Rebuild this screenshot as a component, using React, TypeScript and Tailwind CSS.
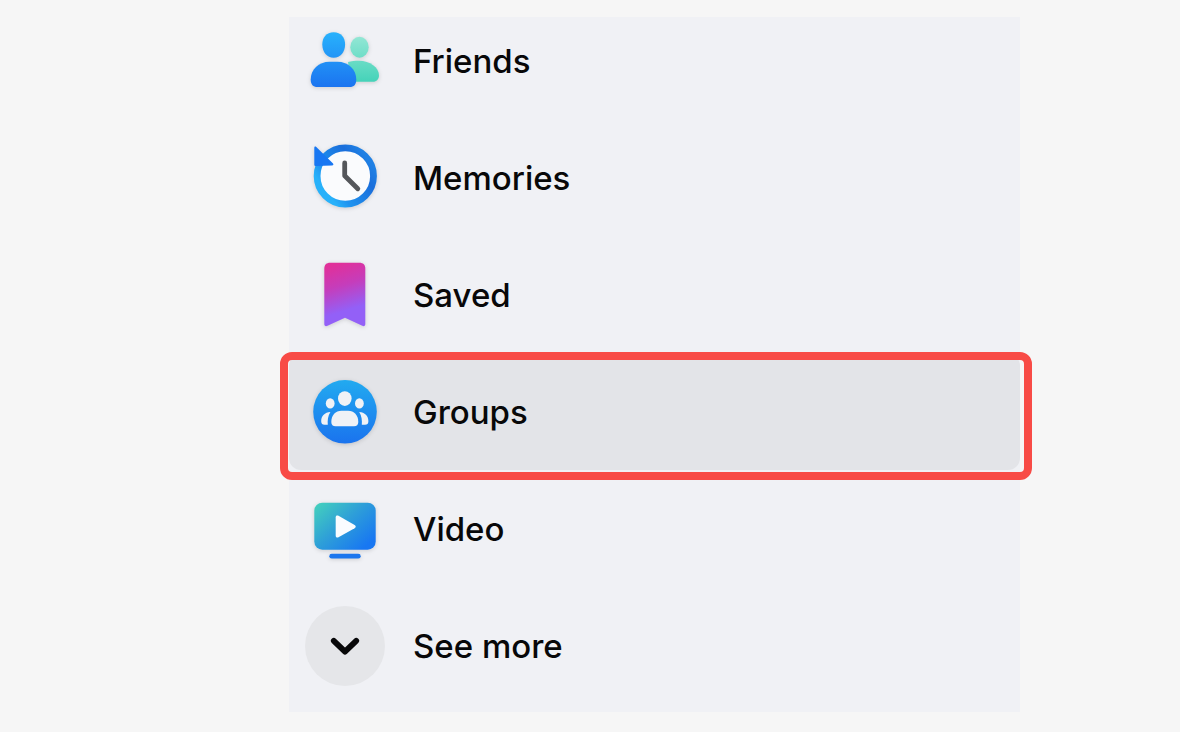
import type { ReactNode } from 'react';
import clsx from 'clsx';

const FriendsIcon = () => (
  <svg viewBox="0 0 80 80" className="size-20 drop-shadow-sm" aria-hidden="true">
    <defs>
      <linearGradient id="friends-front" gradientUnits="userSpaceOnUse" x1="28" y1="11" x2="28" y2="66">
        <stop offset="0" stopColor="#28b2fc" />
        <stop offset="1" stopColor="#1b74f0" />
      </linearGradient>
      <linearGradient id="friends-back" gradientUnits="userSpaceOnUse" x1="54" y1="15" x2="54" y2="60">
        <stop offset="0" stopColor="#94e7d5" />
        <stop offset="1" stopColor="#46d3b9" />
      </linearGradient>
    </defs>
    <g fill="url(#friends-back)">
      <ellipse cx="54.5" cy="26.2" rx="9.2" ry="10.5" />
      <path d="M43 41C46 40 50 39.7 54 39.7C65 39.7 74 46.5 74 54.5C74 58 71.5 60.8 68 60.8H46Z" />
    </g>
    <g fill="url(#friends-front)">
      <path d="M28.7 11.3C36 11.3 40.1 16.5 40.1 23.5C40.1 31 35.5 36.7 28.7 36.7C21.9 36.7 17.3 31 17.3 23.5C17.3 16.5 21.4 11.3 28.7 11.3Z" />
      <path d="M24.5 40.7H32.5C43.5 40.7 51.3 48.5 51.3 58.5C51.3 63.5 49 66 44.5 66H12.5C8 66 5.7 63.5 5.7 58.5C5.7 48.5 13.5 40.7 24.5 40.7Z" />
    </g>
  </svg>
);

const MemoriesIcon = () => (
  <svg viewBox="0 0 80 80" className="size-20 drop-shadow-sm" aria-hidden="true">
    <defs>
      <linearGradient id="memories-ring" x1="0.75" y1="0" x2="0" y2="0.55">
        <stop offset="0" stopColor="#1f80e4" />
        <stop offset="0.25" stopColor="#1a6edb" />
        <stop offset="0.8" stopColor="#1f94f0" />
        <stop offset="1" stopColor="#27b1fa" />
      </linearGradient>
    </defs>
    <circle cx="40.3" cy="38" r="28.2" fill="#fafbfd" stroke="url(#memories-ring)" strokeWidth="6.8" />
    <path d="M9.3 9.8C9.3 8.6 10.4 8.2 11.3 9.1L27.8 25.2C28.9 26.3 28.4 27.4 27 27.4L10.8 28C9.8 28 9.3 27.5 9.3 26.5Z" fill="#1877f2" />
    <path d="M39.7 25V37.7L52.8 50.8" fill="none" stroke="#54565a" strokeWidth="4.8" strokeLinecap="round" strokeLinejoin="round" />
  </svg>
);

const SavedIcon = () => (
  <svg viewBox="0 0 80 80" className="size-20 drop-shadow-sm" aria-hidden="true">
    <defs>
      <linearGradient id="saved-fill" x1="0.4" y1="0" x2="0.6" y2="1">
        <stop offset="0" stopColor="#e0309a" />
        <stop offset="0.35" stopColor="#c53dbb" />
        <stop offset="0.75" stopColor="#9360f7" />
        <stop offset="1" stopColor="#9360f7" />
      </linearGradient>
    </defs>
    <path
      d="M25.3 7.7H54.3C58.3 7.7 60.3 9.7 60.3 13.7V69C60.3 71 59 71.6 57.3 70.8L40 62.7L22.5 70.8C20.6 71.6 19.3 71 19.3 69V13.7C19.3 9.7 21.3 7.7 25.3 7.7Z"
      fill="url(#saved-fill)"
    />
  </svg>
);

const GroupsIcon = () => (
  <svg viewBox="0 0 80 80" className="size-20 drop-shadow-sm" aria-hidden="true">
    <defs>
      <linearGradient id="groups-fill" x1="0.5" y1="0" x2="0.5" y2="1">
        <stop offset="0" stopColor="#22aaf0" />
        <stop offset="1" stopColor="#1a73ee" />
      </linearGradient>
    </defs>
    <circle cx="40" cy="39.8" r="31.8" fill="url(#groups-fill)" />
    <g fill="#f0f2f6">
      <ellipse cx="39.8" cy="26.6" rx="6.8" ry="7.4" />
      <ellipse cx="25.2" cy="31.4" rx="4.4" ry="5.2" />
      <ellipse cx="54.4" cy="31.4" rx="4.4" ry="5.2" />
      <path d="M36.5 38.7H43.1C49 38.7 53.3 43 53.3 50C53.3 52.8 51.8 54.3 49 54.3H30.6C27.8 54.3 26.3 52.8 26.3 50C26.3 43 30.6 38.7 36.5 38.7Z" />
      <path d="M25.4 40C19.8 40.2 16.2 44 16.2 49.2C16.2 51.6 17.4 52.7 19.6 52.7H22.8C22.4 48.2 22.9 44 25.4 40Z" />
      <path d="M54.2 40C59.8 40.2 63.4 44 63.4 49.2C63.4 51.6 62.2 52.7 60 52.7H56.8C57.2 48.2 56.7 44 54.2 40Z" />
    </g>
  </svg>
);

const VideoIcon = () => (
  <svg viewBox="0 0 80 80" className="size-20 drop-shadow-sm" aria-hidden="true">
    <defs>
      <linearGradient id="video-fill" gradientUnits="userSpaceOnUse" x1="14" y1="12" x2="58" y2="60">
        <stop offset="0" stopColor="#43d0bd" />
        <stop offset="0.5" stopColor="#2e9fd8" />
        <stop offset="1" stopColor="#1877f2" />
      </linearGradient>
    </defs>
    <rect x="9.3" y="13.7" width="61.4" height="47" rx="8" fill="url(#video-fill)" />
    <rect x="24.3" y="64.8" width="31.4" height="4.8" rx="2.4" fill="#1b76ee" />
    <path d="M30.7 28.3C30.7 26.6 32 26 33.5 26.8L49.6 36C51.1 36.9 51.1 38.3 49.6 39.2L33.5 48.2C32 49 30.7 48.4 30.7 46.7Z" fill="#fafcff" />
  </svg>
);

const ChevronIcon = () => (
  <span className="block size-20 rounded-full bg-[#e5e6e9]">
    <svg viewBox="0 0 80 80" className="size-20" aria-hidden="true">
      <path d="M28.8 34.8L40 45.6L51.2 34.8" fill="none" stroke="#080809" strokeWidth="5.8" strokeLinecap="round" strokeLinejoin="round" />
    </svg>
  </span>
);

interface MenuItem {
  label: string;
  icon: ReactNode;
  selected?: boolean;
}

const items: MenuItem[] = [
  { label: 'Friends', icon: <FriendsIcon /> },
  { label: 'Memories', icon: <MemoriesIcon /> },
  { label: 'Saved', icon: <SavedIcon /> },
  { label: 'Groups', icon: <GroupsIcon />, selected: true },
  { label: 'Video', icon: <VideoIcon /> },
];

const rowClass = 'flex h-[116px] w-full items-center gap-7 rounded-xl pl-4 text-left';

export default function App() {
  return (
    <main className="min-h-screen bg-[#f6f6f6] pt-[17px] pr-40 pb-5 pl-[289px] font-['Inter',sans-serif] text-[33px] leading-10 font-medium text-[#080809]">
      <nav className="flex flex-col bg-[#f0f1f5] pb-2">
        <ul className="-mt-[14px] flex flex-col gap-px">
          {items.map((item) => (
            <li key={item.label} className="relative">
              <a href="#" className={clsx(rowClass, item.selected && 'bg-[#e3e4e8]')}>
                {item.icon}
                <span>{item.label}</span>
              </a>
              {/* Highlight frame */}
              {item.selected && (
                <div className="pointer-events-none absolute -top-0.5 -right-3 -bottom-2.5 -left-[9px] rounded-xl border-8 border-[#f84b46]" />
              )}
            </li>
          ))}
          <li>
            <button type="button" className={rowClass}>
              <ChevronIcon />
              <span>See more</span>
            </button>
          </li>
        </ul>
      </nav>
    </main>
  );
}
